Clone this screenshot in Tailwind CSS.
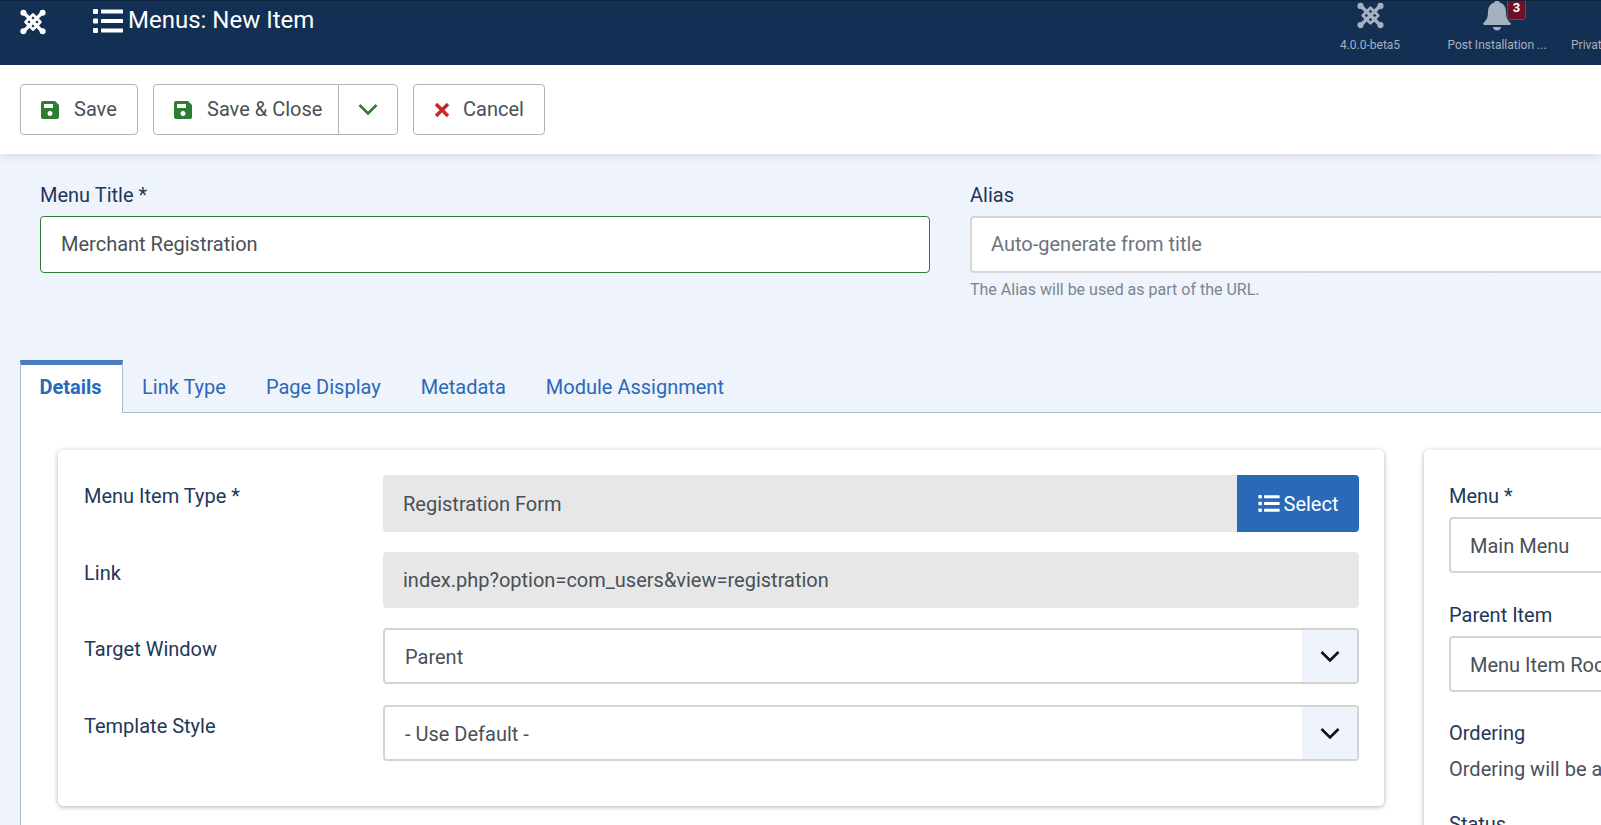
<!DOCTYPE html>
<html lang="en">
<head>
    <meta charset="UTF-8">
    <title>Menus: New Item</title>
    <script src="https://cdn.jsdelivr.net/npm/@tailwindcss/browser@4"></script>
</head>
<body class="bg-[#eff3fb] font-['Roboto',sans-serif] text-[20px] text-[#495057] h-[825px] w-[1601px] overflow-hidden">

    <!-- Joomla mark, reused below -->
    <svg class="hidden">
        <symbol id="joomla" viewBox="0 0 26 26">
            <g fill="none" stroke="currentColor" stroke-linecap="round" stroke-linejoin="round">
                <path stroke-width="3.400" d="M4 4 L22 22 M22 4 L4 22"/>
                <path stroke-width="2.600" d="M13 5.500 L20.500 13 L13 20.500 L5.500 13 Z"/>
            </g>
            <g fill="currentColor">
                <circle cx="3.400" cy="3.800" r="3"/><circle cx="22.600" cy="3.800" r="3"/>
                <circle cx="3.400" cy="22.200" r="3"/><circle cx="22.600" cy="22.200" r="3"/>
            </g>
        </symbol>
        <symbol id="list" viewBox="0 0 30 24">
            <g fill="currentColor">
                <rect x="0" y="0" width="5" height="5" rx="1"/><rect x="0" y="9.500" width="5" height="5" rx="1"/><rect x="0" y="19" width="5" height="5" rx="1"/>
                <rect x="8" y="0.500" width="22" height="4" rx="0.500"/><rect x="8" y="10" width="22" height="4" rx="0.500"/><rect x="8" y="19.500" width="22" height="4" rx="0.500"/>
            </g>
        </symbol>
        <symbol id="floppy" viewBox="0 0 18 18">
            <path fill="currentColor" fill-rule="evenodd" d="M2 0H14L18 4V16a2 2 0 0 1-2 2H2a2 2 0 0 1-2-2V2a2 2 0 0 1 2-2ZM3 3V7H12V3ZM9 10a2.500 2.500 0 1 0 .01 0Z"/>
        </symbol>
        <symbol id="chev" viewBox="0 0 20 13">
            <path d="M1.500 2 L10 10.500 L18.500 2" fill="none" stroke="currentColor" stroke-width="2.600"/>
        </symbol>
    </svg>

    <!-- Шапка -->
    <header class="h-[65px] bg-[#132f53] border-t border-[#0f2440] flex justify-between overflow-hidden text-white">
        <div class="flex items-start">
            <svg class="w-[26px] h-[26px] ml-[20px] mt-[8px] text-white"><use href="#joomla"/></svg>
            <svg class="w-[30px] h-[24px] ml-[47px] mt-[8px] text-white"><use href="#list"/></svg>
            <h1 class="ml-[5px] mt-[3px] text-[24px] leading-[32px]">Menus: New Item</h1>
        </div>
        <div class="w-[300px] shrink-0 flex text-[#a6b1c0] text-[12px] relative">
            <div class="w-[140px] shrink-0 ml-[-1px] flex flex-col items-center">
                <svg class="w-[27px] h-[27px] mt-[1px]"><use href="#joomla"/></svg>
                <span class="mt-[9px] leading-[14px]">4.0.0-beta5</span>
            </div>
            <div class="w-[116px] shrink-0 ml-[-1px] flex flex-col items-center relative">
                <svg class="w-[28px] h-[31px] -mt-[1px]" viewBox="0 0 28 31"><path fill="currentColor" d="M14 0c1.500 0 2.500 1 2.500 2.400C21 3.600 23 7.400 23 12c0 6 1.600 8 4.500 11 .7.8.3 2-1 2H1.500c-1.300 0-1.700-1.200-1-2C3.400 20 5 18 5 12 5 7.400 7 3.600 11.500 2.400 11.500 1 12.500 0 14 0ZM10 27h8c0 2-2 3.500-4 3.500s-4-1.500-4-3.500Z"/></svg>
                <span class="mt-[7px] leading-[14px] whitespace-nowrap">Post Installation ...</span>
                <span class="absolute left-[68px] -top-[1px] w-[19px] h-[20px] rounded-b-[3px] bg-[#6d1222] border border-[#8a3a46] text-white text-[13px] font-bold leading-[14px] text-center">3</span>
            </div>
            <div class="ml-[16px] mt-[37px] leading-[14px] whitespace-nowrap">Private</div>
        </div>
    </header>

    <!-- Кнопки -->
    <div class="relative z-10 h-[89px] bg-white shadow-[0_2px_8px_rgba(40,60,100,0.12)] flex items-start pt-[19px] pl-[20px] gap-[15px]">
        <button class="h-[51px] w-[118px] border border-[#adb5bd] rounded-[4px] flex items-center pl-[20px]">
            <svg class="w-[18px] h-[18px] text-[#2f7d32]"><use href="#floppy"/></svg>
            <span class="ml-[15px] pb-[2px]">Save</span>
        </button>
        <div class="h-[51px] w-[245px] border border-[#adb5bd] rounded-[4px] flex items-center">
            <div class="w-[185px] h-full flex items-center pl-[20px] border-r border-[#adb5bd]">
                <svg class="w-[18px] h-[18px] text-[#2f7d32]"><use href="#floppy"/></svg>
                <span class="ml-[15px] pb-[2px]">Save &amp; Close</span>
            </div>
            <div class="flex-1 flex justify-center">
                <svg class="w-[20px] h-[13px] text-[#2f7d32]"><use href="#chev"/></svg>
            </div>
        </div>
        <button class="h-[51px] w-[132px] border border-[#adb5bd] rounded-[4px] flex items-center pl-[20px]">
            <svg class="w-[16px] h-[16px] text-[#c62828]" viewBox="0 0 16 16"><path d="M2 2 L14 14 M14 2 L2 14" stroke="currentColor" stroke-width="3.400" fill="none"/></svg>
            <span class="ml-[13px] pb-[2px]">Cancel</span>
        </button>
    </div>

    <main class="relative">
        <!-- Фоновый узор -->
        <svg class="absolute left-[900px] top-0 w-[701px] h-[260px]" viewBox="0 0 701 260" fill="none" stroke="#f3f6fc" stroke-width="1">
            <circle cx="220" cy="200" r="95"/><circle cx="220" cy="200" r="50"/>
            <circle cx="590" cy="200" r="95"/><circle cx="590" cy="200" r="50"/>
            <path d="M150 200 L200 130 Q220 110 240 130 L290 200 L240 260"/>
            <path d="M520 200 L570 130 Q590 110 610 130 L660 200 L610 260"/>
            <path d="M110 40 L150 90 Q165 100 180 90 L235 20"/>
            <path d="M390 80 L440 20 Q455 10 470 20 L520 80"/>
            <path d="M280 0 Q300 30 340 25 Q370 20 385 0"/>
            <path d="M560 0 Q580 30 620 25 Q650 20 665 0"/>
            <circle cx="410" cy="200" r="80"/>
        </svg>

        <!-- Заголовок и алиас -->
        <section class="relative grid grid-cols-[890px_890px] gap-x-[40px] pl-[40px] pt-[26px] w-[1900px] h-[206px]">
            <div>
                <label class="block text-[#22375a] leading-[30px] h-[36px]">Menu Title *</label>
                <input value="Merchant Registration" class="w-full h-[57px] bg-white border border-[#2f7d32] rounded-[4px] px-[20px] pb-[2px] outline-none text-[#495057]">
            </div>
            <div>
                <label class="block text-[#22375a] leading-[30px] h-[36px]">Alias</label>
                <input placeholder="Auto-generate from title" class="w-full h-[57px] bg-white border-2 border-[#d6d6d6] rounded-[4px] px-[19px] pb-[2px] outline-none placeholder:text-[#6c757d]">
                <p class="mt-[7px] text-[16px] leading-[20px] text-[#7c858e]">The Alias will be used as part of the URL.</p>
            </div>
        </section>

        <!-- Вкладки -->
        <nav class="relative ml-[20px] h-[53px] flex border-b border-[#a9bdd4] text-[#2a69b8]">
            <a class="w-[103px] h-[53px] bg-white border-x border-[#a9bdd4] border-t-[5px] border-t-[#4a7cc0] font-bold flex items-center justify-center pb-[4px] pr-[2px]">Details</a>
            <a class="ml-[19px] pt-[2px] flex items-center">Link Type</a>
            <a class="ml-[40px] pt-[2px] flex items-center">Page Display</a>
            <a class="ml-[40px] pt-[2px] flex items-center">Metadata</a>
            <a class="ml-[40px] pt-[2px] flex items-center">Module Assignment</a>
        </nav>

        <!-- Содержимое вкладки -->
        <section class="relative ml-[20px] h-[500px] bg-white border-l border-[#a9bdd4] flex items-start pt-[37px] pl-[37px] gap-[40px] w-[1700px]">
            <div class="w-[1326px] h-[356px] shrink-0 rounded-[5px] bg-white shadow-[0_1px_5px_rgba(0,0,0,0.3)] pt-[25px] pl-[26px]">
                <div class="flex h-[57px]">
                    <label class="w-[299px] text-[#22375a] leading-[42px]">Menu Item Type *</label>
                    <div class="w-[854px] bg-[#e7e7e7] rounded-l-[4px] pl-[20px] flex items-center">Registration Form</div>
                    <button class="w-[122px] bg-[#2a69b8] text-white rounded-r-[4px] flex items-center justify-center">
                        <svg class="w-[22px] h-[17px] mr-[4px]"><use href="#list"/></svg>Select
                    </button>
                </div>
                <div class="flex h-[56px] mt-[20px]">
                    <label class="w-[299px] text-[#22375a] leading-[42px]">Link</label>
                    <div class="w-[976px] bg-[#e7e7e7] rounded-[4px] pl-[20px] flex items-center">index.php?option=com_users&amp;view=registration</div>
                </div>
                <div class="flex h-[56px] mt-[20px]">
                    <label class="w-[299px] text-[#22375a] leading-[42px]">Target Window</label>
                    <div class="w-[976px] border-2 border-[#d4d4d4] rounded-[4px] pl-[20px] flex items-center justify-between">
                        <span class="pt-[2px]">Parent</span>
                        <span class="w-[55px] h-full bg-[#eff3fb] flex items-center justify-center"><svg class="w-[20px] h-[13px] text-[#111]"><use href="#chev"/></svg></span>
                    </div>
                </div>
                <div class="flex h-[56px] mt-[21px]">
                    <label class="w-[299px] text-[#22375a] leading-[42px]">Template Style</label>
                    <div class="w-[976px] border-2 border-[#d4d4d4] rounded-[4px] pl-[20px] flex items-center justify-between">
                        <span class="pt-[2px]">- Use Default -</span>
                        <span class="w-[55px] h-full bg-[#eff3fb] flex items-center justify-center"><svg class="w-[20px] h-[13px] text-[#111]"><use href="#chev"/></svg></span>
                    </div>
                </div>
            </div>

            <div class="w-[400px] shrink-0 h-[400px] rounded-[5px] bg-white shadow-[0_1px_5px_rgba(0,0,0,0.3)] pt-[31px] pl-[25px]">
                <label class="block text-[#22375a] leading-[30px] h-[36px]">Menu *</label>
                <div class="w-[300px] h-[56px] border-2 border-[#d4d4d4] rounded-[4px] pl-[19px] pt-[2px] flex items-center whitespace-nowrap">Main Menu</div>
                <label class="block text-[#22375a] leading-[30px] h-[36px] mt-[27px]">Parent Item</label>
                <div class="w-[300px] h-[56px] border-2 border-[#d4d4d4] rounded-[4px] pl-[19px] pt-[2px] flex items-center whitespace-nowrap">Menu Item Root</div>
                <label class="block text-[#22375a] leading-[30px] mt-[26px]">Ordering</label>
                <p class="mt-[6px] leading-[30px] whitespace-nowrap">Ordering will be available after saving</p>
                <label class="block text-[#22375a] leading-[30px] mt-[25px]">Status</label>
            </div>
        </section>
    </main>
</body>
</html>
